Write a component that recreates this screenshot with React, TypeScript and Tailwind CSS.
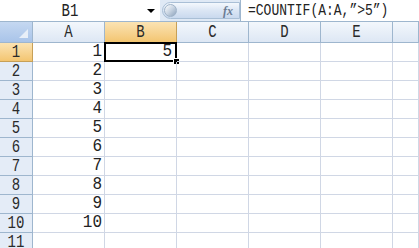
import React from 'react';

const COLS = ['A', 'B', 'C', 'D', 'E', ''];
const ROWS = [1, 2, 3, 4, 5, 6, 7, 8, 9, 10, 11];

const mono = "font-['Liberation_Mono','Courier_New',monospace] leading-none";

export default function App() {
  return (
    <div className="w-[419px] h-[248px] overflow-hidden bg-white text-[#222]">
      {/* 编辑栏 */}
      <div className="h-[22px] flex items-stretch bg-[#dfe9f5] border-b border-[#9eb6ce]">
        <div className="w-[160px] bg-white flex items-center relative">
          <span className={`${mono} text-[14px] w-full text-center pr-[20px] inline-block scale-y-125`}>B1</span>
          <span className="absolute left-[147px] top-[9px] w-0 h-0 border-l-[4px] border-r-[4px] border-t-[4px] border-l-transparent border-r-transparent border-t-black" />
        </div>
        <div className="w-[80px] py-[2px] pl-[2px] flex items-stretch">
          <div className="flex-1 rounded-l-full bg-gradient-to-b from-[#f4f8fd] via-[#dbe6f4] to-[#c9d9ee] border border-[#a9bfd6] flex items-center justify-between pl-[1px] pr-[6px]">
            <span className="w-[13px] h-[13px] rounded-full bg-gradient-to-br from-white via-[#c8d4e2] to-[#8ea4bd] border border-[#9fb3c8]" />
            <span className="font-['Liberation_Serif',serif] italic text-[12px] leading-none text-[#6b7c93] font-bold">fx</span>
          </div>
        </div>
        <div className="flex-1 bg-white border-l border-[#9eb6ce] flex items-center pl-[7px]">
          <span className={`${mono} text-[13px] inline-block scale-y-125`}>=COUNTIF(A:A,”&gt;5”)</span>
        </div>
      </div>

      {/* 表格 */}
      <div className="grid grid-cols-[33px_72px_72px_72px_72px_72px_26px]">
        {/* 表头 */}
        <div className="h-[21px] bg-gradient-to-b from-[#c5d8f1] to-[#a9c4e9] border-r border-b border-[#9eb6ce] relative">
          <span className="absolute right-[4px] bottom-[4px] w-0 h-0 border-l-[9px] border-l-transparent border-b-[9px] border-b-[#e8eff8]" />
        </div>
        {COLS.map((c) => (
          <div
            key={c || 'F'}
            className={`h-[21px] border-r border-b flex items-center justify-center ${
              c === 'B'
                ? 'bg-gradient-to-b from-[#fbe3b3] to-[#f3c570] border-[#c7a057]'
                : 'bg-gradient-to-b from-[#f3f7fc] to-[#dde7f4] border-[#9eb6ce]'
            }`}
          >
            <span className={`${mono} text-[14px] text-[#2a2a2a] inline-block scale-y-125`}>{c}</span>
          </div>
        ))}

        {ROWS.map((r) => (
          <React.Fragment key={r}>
            <div
              className={`h-[19px] border-r border-b flex items-center justify-center ${
                r === 1
                  ? 'bg-gradient-to-b from-[#fbe3b3] to-[#f3c570] border-[#c7a057]'
                  : 'bg-[#e4ecf7] border-[#9eb6ce]'
              }`}
            >
              <span className={`${mono} text-[14px] text-[#2a2a2a] inline-block scale-y-125`}>{r}</span>
            </div>
            {COLS.map((c) => (
              <div key={c || 'F'} className="h-[19px] border-r border-b border-[#d0d7e5] relative flex items-center justify-end pr-[2px]">
                {c === 'A' && r <= 10 && (
                  <span className={`${mono} text-[16px] inline-block scale-y-110`}>{r}</span>
                )}
                {c === 'B' && r === 1 && (
                  <>
                    <span className={`${mono} text-[16px] inline-block scale-y-110 pr-[2px]`}>5</span>
                    <div className="absolute -left-[1px] -top-[1px] w-[73px] h-[20px] border-2 border-black pointer-events-none" />
                    <div className="absolute right-[-4px] bottom-[-4px] w-[7px] h-[7px] bg-black border border-white" />
                  </>
                )}
              </div>
            ))}
          </React.Fragment>
        ))}
      </div>
    </div>
  );
}
